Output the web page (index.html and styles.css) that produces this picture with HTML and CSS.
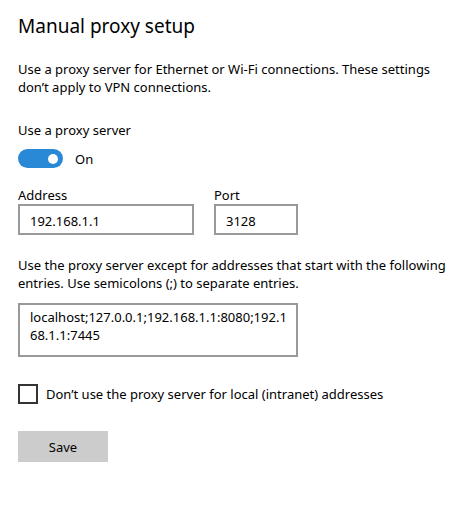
FILE: index.html
```html
<!DOCTYPE html>
<html>
<head>
	<meta charset="UTF-8">
	<title>Manual proxy setup</title>
<link rel="stylesheet" href="styles.css">
</head>
<body>
	<div class="seite">
		<h1 class="titel">Manual proxy setup</h1>

		<p class="info">Use a proxy server for Ethernet or Wi-Fi connections. These settings don’t apply to VPN connections.</p>

		<div class="label">Use a proxy server</div>
		<div class="schalter-zeile">
			<span class="schalter"><span class="knopf"></span></span>
			<span class="status">On</span>
		</div>

		<div class="felder">
			<div class="feld">
				<div class="label">Address</div>
				<div class="eingabe adresse">192.168.1.1</div>
			</div>
			<div class="feld">
				<div class="label">Port</div>
				<div class="eingabe port">3128</div>
			</div>
		</div>

		<p class="info ausnahme">Use the proxy server except for addresses that start with the following entries. Use semicolons (;) to separate entries.</p>
		<div class="eingabe liste">localhost;127.0.0.1;192.168.1.1:8080;192.1<br>68.1.1:7445</div>

		<label class="check-zeile">
			<span class="kasten"></span>
			<span>Don’t use the proxy server for local (intranet) addresses</span>
		</label>

		<button type="button" class="speichern">Save</button>
	</div>
</body>
</html>
```

FILE: styles.css
```css
body {
	margin: 0;
	background-color: #ffffff;
	color: #000000;
	font-family: "Noto Sans", "Open Sans", sans-serif;
	font-size: 13px;
	line-height: 18px;
}
.seite {
	padding: 11px 4px 0 18px;
}
.titel {
	margin: 0;
	font-size: 19px;
	font-weight: normal;
	line-height: 30px;
}
.info {
	margin: 19px 0 0 0;
}
.label {
	margin-top: 25px;
}
.schalter-zeile {
	display: flex;
	align-items: center;
	gap: 12px;
	margin-top: 10px;
}
.schalter {
	display: flex;
	align-items: center;
	justify-content: flex-end;
	width: 45px;
	height: 19px;
	border-radius: 10px;
	background-color: #2a89d6;
	box-sizing: border-box;
	padding-right: 5px;
}
.knopf {
	width: 10px;
	height: 10px;
	border-radius: 50%;
	background-color: #ffffff;
}
.felder {
	display: flex;
	gap: 20px;
}
.felder .label {
	margin-top: 18px;
}
.eingabe {
	border: 2px solid #999999;
	box-sizing: border-box;
	padding: 6px 10px 0 10px;
	height: 31px;
}
.adresse {
	width: 176px;
}
.port {
	width: 84px;
}
.ausnahme {
	margin-top: 21px;
}
.liste {
	width: 280px;
	height: 54px;
	margin-top: 11px;
	padding-top: 3px;
}
.check-zeile {
	display: flex;
	align-items: center;
	gap: 8px;
	margin-top: 27px;
}
.kasten {
	width: 20px;
	height: 20px;
	border: 2px solid #333333;
	box-sizing: border-box;
}
.speichern {
	display: block;
	margin-top: 27px;
	width: 90px;
	height: 31px;
	border: none;
	background-color: #cccccc;
	font-family: inherit;
	font-size: 13px;
	color: #000000;
	padding: 0;
}
```
